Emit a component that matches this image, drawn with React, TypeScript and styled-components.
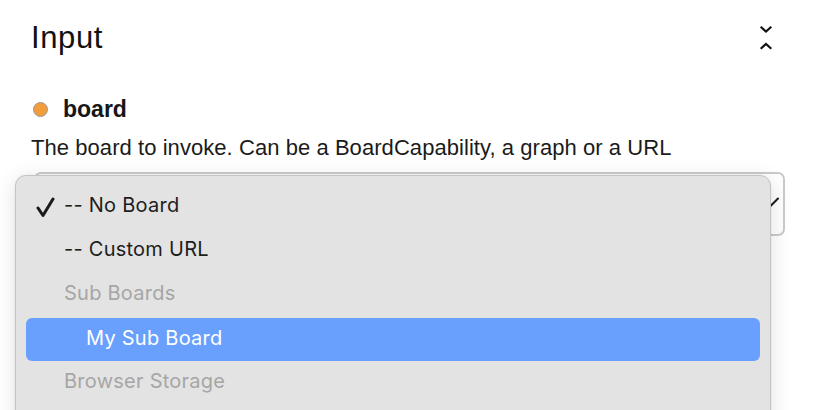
import React from "react";
import styled, { createGlobalStyle } from "styled-components";

const GlobalStyle = createGlobalStyle`
  html, body { margin: 0; padding: 0; background: #ffffff; overflow: hidden; }
  body { font-family: "Liberation Sans", Arial, sans-serif; color: #1b1b1b; }
`;

const Page = styled.div`
  width: 818px;
  height: 410px;
  box-sizing: border-box;
  padding: 21px 33px 0 31px;
  position: relative;
  overflow: hidden;
`;

const Header = styled.div`
  display: flex;
  justify-content: space-between;
  align-items: center;
  height: 34px;
`;

const Title = styled.h1`
  margin: 0;
  font-size: 31px;
  font-weight: 400;
  letter-spacing: 0.6px;
  line-height: 34px;
  color: #111;
`;

const IconButton = styled.button`
  border: none;
  background: none;
  padding: 0;
  margin-right: 12px;
  width: 14px;
  height: 26px;
  display: flex;
  align-items: center;
  justify-content: center;
  color: #111;
`;

const Port = styled.div`
  margin-top: 40px;
`;

const PortName = styled.div`
  display: flex;
  align-items: center;
  gap: 15px;
  font-size: 23px;
  font-weight: 700;
  line-height: 28px;
  color: #161616;
`;

const Dot = styled.span<{ $color: string }>`
  width: 13px;
  height: 13px;
  border-radius: 50%;
  background: ${(p) => p.$color};
  border: 1.5px solid #9a9a9a;
  margin-left: 2px;
`;

const Description = styled.p`
  margin: 12px 0 0;
  font-size: 22px;
  letter-spacing: 0.06px;
  line-height: 26px;
  color: #1b1b1b;
`;

const SelectWrap = styled.div`
  position: relative;
  margin-top: 11px;
`;

const SelectBox = styled.div`
  margin-left: 3px;
  height: 64px;
  box-sizing: border-box;
  border: 2px solid #cacaca;
  border-radius: 7px;
  display: flex;
  align-items: center;
  justify-content: flex-end;
  padding: 0 4px 4px 0;
`;

const Menu = styled.div`
  position: absolute;
  top: 3px;
  left: -16px;
  width: 756px;
  height: 300px;
  box-sizing: border-box;
  background: #e3e3e3;
  border: 1px solid #c4c4c4;
  border-radius: 11px;
  box-shadow: 0 4px 22px rgba(0, 0, 0, 0.12), 0 0 2px rgba(0, 0, 0, 0.08);
  padding: 7px 10px;
  font-family: Inter, "Liberation Sans", sans-serif;
`;

const Item = styled.div<{ $disabled?: boolean; $selected?: boolean; $indent?: boolean; $shift?: number }>`
  height: ${(p) => (p.$selected ? 43 : 44)}px;
  box-sizing: border-box;
  margin-top: ${(p) => p.$shift ?? 0}px;
  padding-bottom: ${(p) => (p.$selected ? 4 : 0)}px;
  display: flex;
  align-items: center;
  border-radius: 6px;
  font-size: 20px;
  line-height: 24px;
  letter-spacing: 0.25px;
  padding-left: ${(p) => (p.$indent ? 60 : 38)}px;
  position: relative;
  color: ${(p) => (p.$selected ? "#ffffff" : p.$disabled ? "#a6a6a6" : "#1e1e1e")};
  background: ${(p) => (p.$selected ? "#69a0fd" : "transparent")};
`;

const Check = styled.span`
  position: absolute;
  left: 10px;
  top: 14px;
  width: 19px;
  height: 21px;
  display: flex;
`;

const CollapseIcon = () => (
  <svg width="14" height="26" viewBox="0 0 14 26" fill="none" stroke="currentColor" strokeWidth="2.2" strokeLinecap="square">
    <path d="M2.5 2.5 L7 6.5 L11.5 2.5" />
    <path d="M2.5 23 L7 19 L11.5 23" />
  </svg>
);

const CheckIcon = () => (
  <svg width="19" height="21" viewBox="0 0 19 21" fill="none" stroke="#1a1a1a" strokeWidth="3" strokeLinecap="round" strokeLinejoin="round">
    <path d="M2 11 L7 18.5 L17 2" />
  </svg>
);

const SelectChevron = () => (
  <svg width="16" height="10" viewBox="0 0 16 10" fill="none" stroke="#1a1a1a" strokeWidth="2" strokeLinecap="round">
    <path d="M1 1.5 L8 8.5 L15 1.5" />
  </svg>
);

export default function App() {
  return (
    <>
      <GlobalStyle />
      <Page>
        <Header>
          <Title>Input</Title>
          <IconButton aria-label="collapse">
            <CollapseIcon />
          </IconButton>
        </Header>
        <Port>
          <PortName>
            <Dot $color="#f39c3a" />
            board
          </PortName>
          <Description>The board to invoke. Can be a BoardCapability, a graph or a URL</Description>
          <SelectWrap>
            <SelectBox>
              <SelectChevron />
            </SelectBox>
            <Menu>
              <Item>
                <Check>
                  <CheckIcon />
                </Check>
                -- No Board
              </Item>
              <Item>-- Custom URL</Item>
              <Item $disabled>Sub Boards</Item>
              <Item $selected $indent $shift={3}>
                My Sub Board
              </Item>
              <Item $disabled $shift={-2}>
                Browser Storage
              </Item>
            </Menu>
          </SelectWrap>
        </Port>
      </Page>
    </>
  );
}
